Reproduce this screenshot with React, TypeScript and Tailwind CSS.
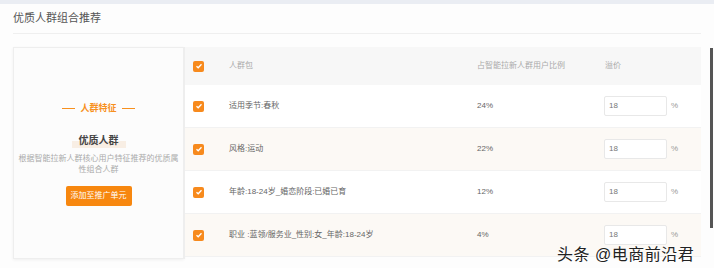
import React from 'react';

const rows = [
  { name: '适用季节:春秋', ratio: '24%', warm: false },
  { name: '风格:运动', ratio: '22%', warm: true },
  { name: '年龄:18-24岁_婚恋阶段:已婚已育', ratio: '12%', warm: false },
  { name: '职业 :蓝领/服务业_性别:女_年龄:18-24岁', ratio: '4%', warm: true },
];

function Check() {
  return (
    <div className="w-[11px] h-[11px] rounded-[2px] bg-[#f78a1d] flex items-center justify-center">
      <svg width="8" height="8" viewBox="0 0 8 8">
        <path d="M1.5 4.2 L3.2 5.8 L6.5 2.3" stroke="#fff" strokeWidth="1.3" fill="none" />
      </svg>
    </div>
  );
}

export default function App() {
  return (
    <div
      className="w-[714px] h-[268px] bg-[#fdfdfd] overflow-hidden relative"
      style={{ fontFamily: '"Liberation Sans", "Noto Sans CJK SC", sans-serif' }}
    >
      <div className="h-[4px] bg-[#eaedf3]" />
      <div className="px-[13px]">
        <div className="h-[29px] flex items-center text-[11px] text-[#555]">优质人群组合推荐</div>
        <div className="h-[1px] bg-[#efefef]" />
        <div className="mt-[13px] flex h-[212px]">
          {/* left panel */}
          <div className="w-[171px] bg-[#fcfcfc] border border-[#eee] shadow-[0_1px_3px_rgba(0,0,0,0.06)] flex flex-col items-center pt-[54px]">
            <div className="flex items-center gap-[5px] text-[9px] font-bold text-[#f7901e]">
              <span className="w-[13px] h-[1px] bg-[#f7901e]" />
              人群特征
              <span className="w-[13px] h-[1px] bg-[#f7901e]" />
            </div>
            <div className="mt-[17px] text-[10px] font-bold text-[#444] px-[7px] bg-[linear-gradient(transparent_55%,#f8eee4_55%)]">
              优质人群
            </div>
            <div className="mt-[5px] w-[160px] text-center text-[8px] leading-[11px] text-[#aaa]">
              根据智能拉新人群核心用户特征推荐的优质属性组合人群
            </div>
            <div className="mt-[11px] w-[66px] h-[20px] rounded-[2px] bg-[#f7870f] text-white text-[8px] flex items-center justify-center">
              添加至推广单元
            </div>
          </div>
          {/* table */}
          <div className="flex-1 border-l border-[#eee] text-[8px] text-[#666]">
            <div className="h-[38px] bg-[#f7f7f7] flex items-center text-[#aaa]">
              <div className="w-[44px] pl-[8px]"><Check /></div>
              <div className="w-[248px]">人群包</div>
              <div className="w-[128px]">占智能拉新人群用户比例</div>
              <div>溢价</div>
            </div>
            {rows.map((r) => (
              <div
                key={r.name}
                className={`h-[43px] flex items-center border-b border-[#f2f2f2] ${r.warm ? 'bg-[#fcf9f5]' : 'bg-white'}`}
              >
                <div className="w-[44px] pl-[8px]"><Check /></div>
                <div className="w-[248px]">{r.name}</div>
                <div className="w-[127px]">{r.ratio}</div>
                <div className="w-[63px] h-[20px] border border-[#e8e8e8] rounded-[2px] bg-white flex items-center pl-[4px] text-[#777]">
                  18
                </div>
                <div className="ml-[4px] text-[#999]">%</div>
              </div>
            ))}
          </div>
        </div>
      </div>
      <div className="absolute left-[710px] top-[48px] w-[3px] h-[180px] bg-[#555]" />
      <div
        className="absolute left-[557px] top-[243px] text-[16px] text-[#222] tracking-[0.5px]"
        style={{ textShadow: '0 0 2px #fff, 0 0 2px #fff' }}
      >
        头条 @电商前沿君
      </div>
    </div>
  );
}
